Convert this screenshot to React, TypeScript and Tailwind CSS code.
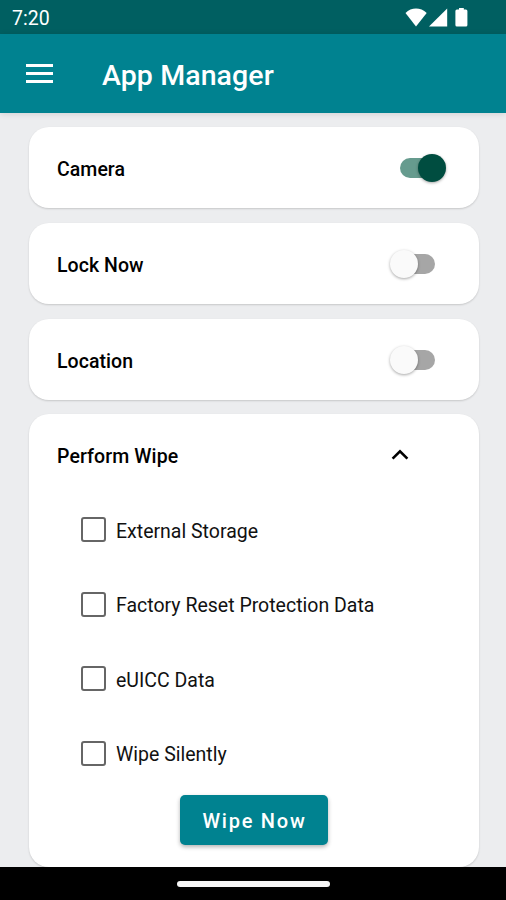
import { useState } from 'react';

const wipeOptions = ['External Storage', 'Factory Reset Protection Data', 'eUICC Data', 'Wipe Silently'];

function StatusBar() {
  return (
    <div className="flex h-[34px] shrink-0 items-center justify-between bg-[#005f61] pr-[37px] pl-[12px] text-white">
      <span className="pt-[4px] text-[19.5px] leading-none">7:20</span>
      <svg width="64" height="20" viewBox="0 0 64 20" fill="#fff" className="block">
        <path d="M0.5 5.9C3.4 3 7.2 1.5 11 1.5S18.6 3 21.7 5.9L11 19.5Z" />
        <path d="M24 19.6L42.2 1.6V19.6Z" />
        <path d="M54 1h4.8v1.6h2.1a1.5 1.5 0 0 1 1.5 1.5v14a1.5 1.5 0 0 1-1.5 1.5h-9a1.5 1.5 0 0 1-1.5-1.5V4.1a1.5 1.5 0 0 1 1.5-1.5H54z" />
      </svg>
    </div>
  );
}

function AppBar() {
  return (
    <header className="z-10 flex h-[79px] shrink-0 items-center bg-[#008290] pl-[26px] text-white shadow-[0_1px_6px_rgba(0,0,0,0.12)]">
      <button aria-label="Menu" className="-mt-[1px] flex w-[27px] flex-col gap-[5px]">
        <span className="h-[3px] bg-white" />
        <span className="h-[3px] bg-white" />
        <span className="h-[3px] bg-white" />
      </button>
      <h1 className="ml-[49px] pt-[5px] text-[28.5px] leading-none font-medium tracking-[0.1px]">App Manager</h1>
    </header>
  );
}

function Toggle({ initial = false }: { initial?: boolean }) {
  const [on, setOn] = useState(initial);
  return (
    <button
      role="switch"
      aria-checked={on}
      onClick={() => setOn(!on)}
      className={`flex h-5 w-[35px] items-center rounded-full ${on ? 'justify-end bg-[#669b8e]' : 'mt-px justify-start bg-[#a6a6a6]'}`}
    >
      <span
        className={`size-7 shrink-0 rounded-full shadow-[0_1px_3px_rgba(0,0,0,0.35)] ${on ? '-mr-[10.5px] bg-[#004d40]' : '-ml-[10px] bg-[#fafafa]'}`}
      />
    </button>
  );
}

function ToggleCard({ label, initial }: { label: string; initial?: boolean }) {
  return (
    <section className="flex h-[81px] shrink-0 items-center justify-between rounded-[20px] bg-white pr-[43.5px] pl-[28.5px] shadow-[0_1px_2px_rgba(0,0,0,0.16)]">
      <h2 className="pt-[4.5px] text-[19.5px] leading-none font-medium tracking-[0.05px]">{label}</h2>
      <Toggle initial={initial} />
    </section>
  );
}

function WipeCard() {
  return (
    <section className="flex h-[453px] shrink-0 flex-col rounded-[20px] bg-white shadow-[0_1px_2px_rgba(0,0,0,0.16)]">
      <div className="flex h-[80px] items-center justify-between pr-[70px] pl-[28.5px]">
        <h2 className="pt-[5px] text-[19.5px] leading-none font-medium tracking-[0.1px]">Perform Wipe</h2>
        <svg width="18" height="12" viewBox="0 0 18 12" fill="none" stroke="#000" strokeWidth="2.6" className="block">
          <path d="M1.6 10.6L9 3.3L16.4 10.6" />
        </svg>
      </div>
      <div className="-mt-[2px] flex flex-col pl-[52.5px]">
        {wipeOptions.map((option) => (
          <label key={option} className="flex h-[74.5px] items-center">
            <input
              type="checkbox"
              className="size-[25px] shrink-0 appearance-none rounded-[3px] border-[2.5px] border-[#666] checked:bg-[#008290]"
            />
            <span className="ml-[10px] pt-[3.5px] text-[19.5px] leading-none tracking-[0px] text-[#111]">{option}</span>
          </label>
        ))}
      </div>
      <button className="mt-[5px] ml-[151.5px] h-[50px] w-[148px] rounded-[5px] bg-[#008290] pt-[2px] pl-[1px] text-[20px] leading-none font-medium tracking-[1.75px] text-white shadow-[0_2px_4px_rgba(0,0,0,0.3)]">
        Wipe Now
      </button>
    </section>
  );
}

export default function App() {
  return (
    <div className="flex h-[900px] w-[506px] flex-col overflow-hidden bg-[#ecedef] font-[Roboto,sans-serif] text-black">
      <StatusBar />
      <AppBar />
      <main className="flex min-h-0 flex-1 flex-col gap-[14.8px] overflow-hidden pt-[14px] pr-[27.5px] pl-[28.5px]">
        <ToggleCard label="Camera" initial />
        <ToggleCard label="Lock Now" />
        <ToggleCard label="Location" />
        <WipeCard />
      </main>
      <div className="flex h-[33px] shrink-0 items-center justify-center bg-black">
        <div className="h-[6px] w-[153px] rounded-full bg-[#f5f5f5]" />
      </div>
    </div>
  );
}
